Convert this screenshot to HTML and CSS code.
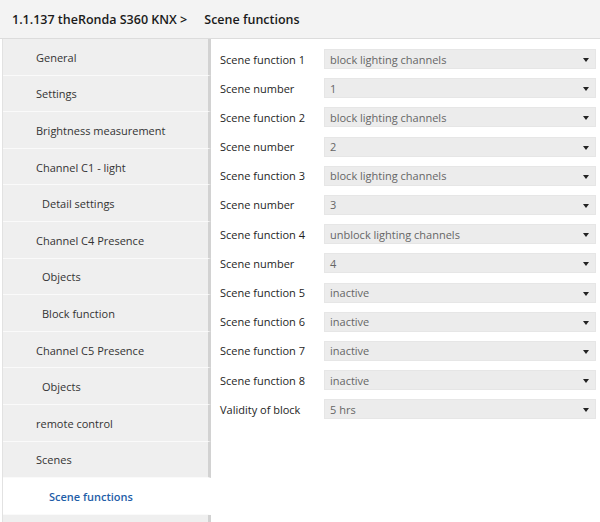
FILE: index.html
```html
<!DOCTYPE html>
<html lang="en">
<head>
    <meta charset="UTF-8">
    <meta name="viewport" content="width=device-width, initial-scale=1.0">
    <title>Scene functions</title>
    <link rel="stylesheet" href="styles.css">
</head>
<body>

<!-- Title bar -->
<div class="titlebar">
    <span class="device">1.1.137 theRonda S360 KNX &gt;</span>
    <span class="page">Scene functions</span>
</div>

<div class="main">
    <!-- Parameter tree -->
    <div class="sidebar">
        <div class="item">General</div>
        <div class="item">Settings</div>
        <div class="item">Brightness measurement</div>
        <div class="item">Channel C1 - light</div>
        <div class="item sub">Detail settings</div>
        <div class="item">Channel C4 Presence</div>
        <div class="item sub">Objects</div>
        <div class="item sub">Block function</div>
        <div class="item">Channel C5 Presence</div>
        <div class="item sub">Objects</div>
        <div class="item">remote control</div>
        <div class="item">Scenes</div>
        <div class="item sub2 active">Scene functions</div>
        <div class="item"></div>
    </div>

    <!-- Parameters -->
    <div class="content">
        <div class="row"><label>Scene function 1</label><div class="select">block lighting channels</div></div>
        <div class="row"><label>Scene number</label><div class="select">1</div></div>
        <div class="row"><label>Scene function 2</label><div class="select">block lighting channels</div></div>
        <div class="row"><label>Scene number</label><div class="select">2</div></div>
        <div class="row"><label>Scene function 3</label><div class="select">block lighting channels</div></div>
        <div class="row"><label>Scene number</label><div class="select">3</div></div>
        <div class="row"><label>Scene function 4</label><div class="select">unblock lighting channels</div></div>
        <div class="row"><label>Scene number</label><div class="select">4</div></div>
        <div class="row"><label>Scene function 5</label><div class="select">inactive</div></div>
        <div class="row"><label>Scene function 6</label><div class="select">inactive</div></div>
        <div class="row"><label>Scene function 7</label><div class="select">inactive</div></div>
        <div class="row"><label>Scene function 8</label><div class="select">inactive</div></div>
        <div class="row"><label>Validity of block</label><div class="select">5 hrs</div></div>
    </div>
</div>

</body>
</html>
```

FILE: styles.css
```css
body {
    margin: 0;
    font-family: "Open Sans", "Noto Sans", sans-serif;
    background-color: white;
    color: #222;
}

/* Title bar */
.titlebar {
    height: 39px;
    box-sizing: border-box;
    background-color: #f3f3f3;
    border-bottom: 1px solid #dcdcdc;
    display: flex;
    align-items: center;
    padding-left: 12px;
    padding-top: 1px;
    font-size: 12.5px;
    font-weight: 600;
    color: #1a1a1a;
}

.titlebar .page {
    margin-left: 17px;
}

.main {
    display: flex;
    align-items: flex-start;
    height: 483px;
    overflow: hidden;
}

/* Sidebar */
.sidebar {
    width: 208px;
    margin-left: 2px;
    border-left: 1px solid #e2e2e2;
    flex-shrink: 0;
}

.item {
    box-sizing: border-box;
    height: 36.6px;
    padding-top: 1px;
    border-bottom: 1px solid #fafafa;
    border-right: 3px solid #d2d2d2;
    background-color: #efefef;
    display: flex;
    align-items: center;
    padding-left: 33px;
    font-size: 11px;
    color: #333;
}

.item.sub {
    padding-left: 39px;
}

.item.sub2 {
    padding-left: 46px;
}

.item.active {
    background-color: white;
    border-right-color: white;
    color: #1f5ea8;
    font-weight: 600;
}

/* Parameter rows */
.content {
    flex: 1;
    padding: 10px 4px 0 9px;
    display: flex;
    flex-direction: column;
    gap: 9.2px;
}

.row {
    display: flex;
    align-items: center;
    height: 20px;
}

.row label {
    width: 104px;
    flex-shrink: 0;
    font-size: 11px;
    color: #1e1e1e;
}

.select {
    flex: 1;
    height: 20px;
    box-sizing: border-box;
    background-color: #ececec;
    border: 1px solid #e6e6e6;
    padding-left: 5px;
    font-size: 11px;
    color: #666;
    display: flex;
    align-items: center;
    position: relative;
}

.select::after {
    content: "";
    position: absolute;
    right: 6px;
    top: 8px;
    border-left: 3.5px solid transparent;
    border-right: 3.5px solid transparent;
    border-top: 4px solid #222;
}
```
